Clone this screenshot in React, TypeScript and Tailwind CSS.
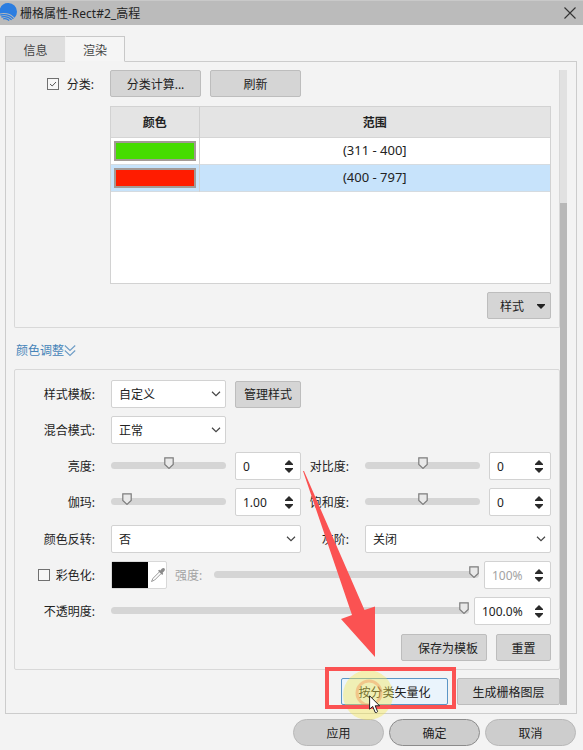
import React, { useState } from "react";
import clsx from "clsx";

const buttonStyle =
  "h-[27px] rounded-xs border border-[#bdbdbd] bg-[#d5d5d5] pt-0.5 text-center hover:bg-[#cccccc]";

const classes = [
  { color: "#46dc00", range: "(311 - 400]" },
  { color: "#ff1c00", range: "(400 - 797]" },
];

function Label({
  htmlFor,
  className,
  children,
}: {
  htmlFor: string;
  className?: string;
  children: React.ReactNode;
}) {
  return (
    <label
      htmlFor={htmlFor}
      className={clsx("shrink-0 pt-0.5 pr-px text-right", className)}
    >
      {children}
    </label>
  );
}

function CheckBox({
  id,
  defaultChecked,
}: {
  id: string;
  defaultChecked?: boolean;
}) {
  const [checked, setChecked] = useState(Boolean(defaultChecked));

  return (
    <span className="relative block size-3">
      <input
        id={id}
        type="checkbox"
        checked={checked}
        onChange={(e) => setChecked(e.target.checked)}
        className="block size-3 appearance-none border border-[#707070] bg-[#f7f7f7]"
      />
      {checked && (
        <svg
          viewBox="0 0 12 12"
          className="pointer-events-none absolute inset-0 size-3"
          fill="none"
          stroke="#555"
        >
          <path d="M3 6 L5.2 8 L9 4" />
        </svg>
      )}
    </span>
  );
}

function Select({
  id,
  options,
  className,
}: {
  id: string;
  options: string[];
  className?: string;
}) {
  return (
    <div className={clsx("relative", className)}>
      <select
        id={id}
        className="block h-7 w-full appearance-none rounded-xs border border-[#d2d2d2] bg-white pt-0.5 pr-6 pl-[7px]"
      >
        {options.map((option) => (
          <option key={option}>{option}</option>
        ))}
      </select>
      <svg
        viewBox="0 0 10 6"
        className="pointer-events-none absolute top-[11px] right-[5px] h-1.5 w-2.5"
        fill="none"
        stroke="#444"
        strokeWidth="1.2"
      >
        <path d="M1 0.8 L5 4.6 L9 0.8" />
      </svg>
    </div>
  );
}

function Slider({
  id,
  min,
  max,
  step = 1,
  initial,
  disabled,
}: {
  id: string;
  min: number;
  max: number;
  step?: number;
  initial: number;
  disabled?: boolean;
}) {
  const [value, setValue] = useState(initial);
  const ratio = (value - min) / (max - min);

  return (
    <div className="relative h-7 min-w-0 flex-1">
      <input
        id={id}
        type="range"
        min={min}
        max={max}
        step={step}
        value={value}
        disabled={disabled}
        onChange={(e) => setValue(Number(e.target.value))}
        className="mt-2.5 block h-[7px] w-full appearance-none rounded-full bg-[#d5d5d5] [&::-webkit-slider-thumb]:size-2.5 [&::-webkit-slider-thumb]:appearance-none [&::-webkit-slider-thumb]:opacity-0"
      />
      {/* Thumb travels the track minus its own width */}
      <div className="pointer-events-none absolute inset-x-0 top-[5px] mr-2.5 h-3">
        <svg
          viewBox="0 0 10 12"
          className="absolute h-3 w-2.5"
          style={{ left: `${ratio * 100}%` }}
          fill="#e9e9e9"
          stroke="#7c7c7c"
          strokeWidth="1.2"
        >
          <path d="M0.8 0.8 H9.2 V7.4 L5 11.4 L0.8 7.4 Z" />
        </svg>
      </div>
    </div>
  );
}

function SpinBox({
  label,
  value,
  className,
  disabled,
}: {
  label: string;
  value: string;
  className?: string;
  disabled?: boolean;
}) {
  const [text, setText] = useState(value);
  const digits = text.split(".")[1]?.replace("%", "").length ?? 0;
  const unit = text.endsWith("%") ? "%" : "";

  const stepBy = (delta: number) =>
    setText((parseFloat(text) + delta).toFixed(digits) + unit);

  return (
    <div
      className={clsx(
        "flex h-7 shrink-0 items-center rounded-xs border border-[#d2d2d2] bg-white pr-[7px] pl-[7px]",
        className,
      )}
    >
      <input
        type="text"
        aria-label={label}
        value={text}
        disabled={disabled}
        onChange={(e) => setText(e.target.value)}
        className="h-full w-0 min-w-0 flex-1 outline-none disabled:text-[#a3a3a3]"
      />
      <div className="flex flex-col gap-[3px]">
        <button type="button" aria-label="+" onClick={() => stepBy(1)}>
          <svg viewBox="0 0 8 5" className="block h-[5px] w-2" fill="#2b2b2b">
            <path d="M4 0 L8 4 V5 H0 V4 Z" />
          </svg>
        </button>
        <button type="button" aria-label="-" onClick={() => stepBy(-1)}>
          <svg viewBox="0 0 8 5" className="block h-[5px] w-2" fill="#2b2b2b">
            <path d="M0 0 H8 V1 L4 5 L0 1 Z" />
          </svg>
        </button>
      </div>
    </div>
  );
}

function Logo() {
  return (
    <svg viewBox="0 0 18 20" className="h-5 w-[18px] shrink-0">
      <path
        d="M0 10.400 V5.500 A8.800 8.800 0 0 1 8.200 0 A8.700 8.700 0 0 1 17 8.700 Q17 12.200 14.600 14.800 Q11.500 11 6.500 10.200 Q3 9.700 0 10.400 Z"
        fill="#2b7de0"
      />
      <g fill="none" stroke="#2b7de0" strokeWidth="1.3">
        <path d="M0.300 12 Q8.500 10.200 13.400 15.800" />
        <path d="M1.400 14 Q7.500 12.500 11.600 16.900" />
        <path d="M3.200 15.800 Q6.500 15 9.200 17.400" />
      </g>
    </svg>
  );
}

function ClassTable() {
  const [selected, setSelected] = useState(1);

  return (
    <div className="h-[178px] border border-[#d2d2d2] bg-white">
      <table className="w-full table-fixed border-collapse text-center">
        <thead>
          <tr className="h-[30px] border-b border-[#d5d5d5] bg-[#e4e4e4]">
            <th className="w-[88px] border-r border-[#cfcfcf] pt-0.5 font-bold">
              颜色
            </th>
            <th className="pt-0.5 font-bold">范围</th>
          </tr>
        </thead>
        <tbody>
          {classes.map((item, index) => (
            <tr
              key={item.range}
              onClick={() => setSelected(index)}
              className={clsx(
                "h-[27px] border-b border-[#d5dbe0]",
                index === selected && "bg-[#c7e3fb]",
              )}
            >
              <td className="border-r border-[#d2d2d2] px-[3px]">
                <button
                  type="button"
                  aria-label={item.color}
                  className="block h-5 w-full border-2 border-[#a39a96]"
                  style={{ backgroundColor: item.color }}
                />
              </td>
              <td className="pt-px text-[13px]">{item.range}</td>
            </tr>
          ))}
        </tbody>
      </table>
    </div>
  );
}

function ColorPicker() {
  return (
    <button
      type="button"
      aria-label="颜色"
      className="flex h-7 w-14 shrink-0 items-center rounded-xs border border-[#d8d8d8] bg-white"
    >
      <span className="h-full w-9 bg-black" />
      <svg viewBox="0 0 16 16" className="ml-0.5 size-4">
        <path
          d="M9.500 4.800 L3 11.300 L1.500 14.500 L4.700 13 L11.200 6.500"
          fill="#fff"
          stroke="#999"
        />
        <path
          d="M8 3.800 L9.200 2.800 L10.200 3.600 L12 1.600 Q13.600 0.600 14.600 1.600 Q15.400 2.800 14.400 4 L12.600 5.800 L13.200 6.800 L12.200 8 Z"
          fill="#8a8a8a"
        />
      </svg>
    </button>
  );
}

// Click marker, frame and arrow drawn on top of the highlighted button
function Callout() {
  return (
    <div className="pointer-events-none">
      <svg
        viewBox="0 0 52 52"
        className="absolute -top-2 left-px z-10 size-[52px]"
      >
        <circle cx="26" cy="25" r="25" fill="#f7e94a" opacity="0.4" />
        <circle
          cx="27"
          cy="23"
          r="12"
          fill="none"
          stroke="#f58a4a"
          strokeWidth="3"
          opacity="0.4"
        />
      </svg>
      <div className="absolute -top-[11px] -right-2 -bottom-1 -left-4 z-20 border-4 border-[#fb5252]" />
      <svg
        viewBox="0 0 12 19"
        className="absolute top-[17px] left-7 z-30 h-[19px] w-3"
      >
        <path
          d="M0.600 0.800 V14.200 L3.700 11.400 L6.200 17.400 Q7.500 18.200 8.600 16.600 L6.200 10.800 H10.600 Z"
          fill="#fff"
          stroke="#222"
        />
      </svg>
      <svg
        viewBox="0 0 72 186"
        className="absolute bottom-12 -left-[38px] z-20 h-[186px] w-[72px]"
        fill="#fb5252"
      >
        <path d="M0 0 L1 0 L61.500 139 L72 135.500 V186 L38 148 L49 144 Z" />
      </svg>
    </div>
  );
}

export default function App() {
  const [tab, setTab] = useState("渲染");

  return (
    <main className="flex min-h-screen flex-col bg-[#f3f3f3] font-['Noto_Sans','Noto_Sans_CJK_SC',sans-serif] text-xs text-[#222]">
      {/* Title bar */}
      <header className="flex h-[25px] items-center border-t border-[#c9c9c9] bg-[#bbbbbb]">
        <Logo />
        <h1 className="ml-0.5 flex-1 pt-px">栅格属性-Rect#2_高程</h1>
        <button type="button" aria-label="关闭" className="mr-[7px]">
          <svg
            viewBox="0 0 12 12"
            className="block size-3"
            fill="none"
            stroke="#333"
            strokeWidth="1.1"
          >
            <path d="M0.500 0.500 L11.500 11.500 M11.500 0.500 L0.500 11.500" />
          </svg>
        </button>
      </header>

      <div className="pt-[11px] pr-1.5 pl-[5px]">
        {/* Tabs */}
        <div role="tablist" className="relative z-10 flex">
          {["信息", "渲染"].map((name) => (
            <button
              key={name}
              type="button"
              role="tab"
              aria-selected={tab === name}
              onClick={() => setTab(name)}
              className={clsx(
                "h-[26px] w-[60px] border border-[#c8c8c8] pt-[3px] text-[#444]",
                tab === name
                  ? "border-b-[#f3f3f3] border-l-[#f3f3f3] bg-[#f5f5f5]"
                  : "border-r-0 bg-[#dedede]",
              )}
            >
              {name}
            </button>
          ))}
        </div>

        <div
          role="tabpanel"
          className="-mt-px flex border border-[#cccccc] py-2 pr-[9px] pl-2"
        >
          <div className="min-w-0 flex-1">
            {/* Classes */}
            <section className="flex gap-3.5 rounded-b-xs border border-t-0 border-[#d8d8d8] pr-2 pb-2">
              <div className="flex h-[27px] w-[81px] shrink-0 items-center justify-end gap-2 pr-px">
                <CheckBox id="classify" defaultChecked />
                <Label htmlFor="classify">分类:</Label>
              </div>
              <div className="flex min-w-0 flex-1 flex-col">
                <div className="mb-[9px] flex gap-[9px]">
                  <button type="button" className={clsx(buttonStyle, "w-[91px]")}>
                    分类计算...
                  </button>
                  <button type="button" className={clsx(buttonStyle, "w-[91px]")}>
                    刷新
                  </button>
                </div>
                <ClassTable />
                <button
                  type="button"
                  className={clsx(
                    buttonStyle,
                    "mt-2 flex w-16 items-center justify-between self-end pr-[5px] pl-3",
                  )}
                >
                  样式
                  <svg viewBox="0 0 8 5" className="h-[5px] w-2" fill="#222">
                    <path d="M0 0 H8 V1 L4 5 L0 1 Z" />
                  </svg>
                </button>
              </div>
            </section>

            <div className="flex h-[41px] items-center pt-[5px] pl-0.5">
              <button
                type="button"
                className="flex items-center text-[#4583b8]"
              >
                颜色调整
                <svg
                  viewBox="0 0 12 12"
                  className="size-3"
                  fill="none"
                  stroke="#6c9cc6"
                  strokeWidth="1.1"
                >
                  <path d="M0.800 0.500 L6 5.500 L11.200 0.500 M0.800 5.500 L6 10.500 L11.200 5.500" />
                </svg>
              </button>
            </div>

            {/* Color adjustment */}
            <section className="rounded-xs border border-[#d8d8d8] pt-2.5 pr-2 pb-2">
              <div className="flex flex-col gap-2">
                <div className="flex items-center">
                  <Label htmlFor="template" className="mr-[15px] w-[81px]">
                    样式模板:
                  </Label>
                  <Select
                    id="template"
                    options={["自定义"]}
                    className="mr-[9px] w-[115px]"
                  />
                  <button type="button" className={clsx(buttonStyle, "w-[66px]")}>
                    管理样式
                  </button>
                </div>

                <div className="flex items-center">
                  <Label htmlFor="blend" className="mr-[15px] w-[81px]">
                    混合模式:
                  </Label>
                  <Select id="blend" options={["正常"]} className="w-[115px]" />
                </div>

                <div className="flex items-center">
                  <Label htmlFor="brightness" className="mr-[15px] w-[81px]">
                    亮度:
                  </Label>
                  <div className="flex flex-[1_1_190px] gap-[9px]">
                    <Slider id="brightness" min={-100} max={100} initial={0} />
                    <SpinBox label="亮度" value="0" className="w-[66px]" />
                  </div>
                  <Label htmlFor="contrast" className="mr-[15px] w-[49px]">
                    对比度:
                  </Label>
                  <div className="flex flex-[1_1_186px] gap-[9px]">
                    <Slider id="contrast" min={-100} max={100} initial={0} />
                    <SpinBox label="对比度" value="0" className="w-[62px]" />
                  </div>
                </div>

                <div className="flex items-center">
                  <Label htmlFor="gamma" className="mr-[15px] w-[81px]">
                    伽玛:
                  </Label>
                  <div className="flex flex-[1_1_190px] gap-[9px]">
                    <Slider id="gamma" min={0} max={10} step={0.1} initial={1} />
                    <SpinBox label="伽玛" value="1.00" className="w-[66px]" />
                  </div>
                  <Label htmlFor="saturation" className="mr-[15px] w-[49px]">
                    饱和度:
                  </Label>
                  <div className="flex flex-[1_1_186px] gap-[9px]">
                    <Slider id="saturation" min={-100} max={100} initial={0} />
                    <SpinBox label="饱和度" value="0" className="w-[62px]" />
                  </div>
                </div>
              </div>

              <div className="mt-[9px] flex flex-col gap-2">
                <div className="flex items-center">
                  <Label htmlFor="invert" className="mr-[15px] w-[81px]">
                    颜色反转:
                  </Label>
                  <Select
                    id="invert"
                    options={["否", "是"]}
                    className="flex-[1_1_190px]"
                  />
                  <Label htmlFor="gray" className="mr-[15px] w-[49px]">
                    灰阶:
                  </Label>
                  <Select
                    id="gray"
                    options={["关闭"]}
                    className="flex-[1_1_186px]"
                  />
                </div>

                <div className="flex items-center">
                  <div className="mr-[15px] flex w-[81px] items-center justify-end gap-1.5">
                    <CheckBox id="colorize" />
                    <Label htmlFor="colorize">彩色化:</Label>
                  </div>
                  <ColorPicker />
                  <Label
                    htmlFor="strength"
                    className="mr-[11px] ml-2 text-[#a3a3a3]"
                  >
                    强度:
                  </Label>
                  <Slider
                    id="strength"
                    min={0}
                    max={100}
                    initial={100}
                    disabled
                  />
                  <SpinBox
                    label="强度"
                    value="100%"
                    className="ml-[5px] w-[67px]"
                    disabled
                  />
                </div>

                <div className="flex items-center">
                  <Label htmlFor="opacity" className="mr-[15px] w-[81px]">
                    不透明度:
                  </Label>
                  <Slider id="opacity" min={0} max={100} initial={100} />
                  <SpinBox
                    label="不透明度"
                    value="100.0%"
                    className="ml-[5px] w-[77px]"
                  />
                </div>
              </div>

              <div className="mt-[9px] flex justify-end gap-[9px]">
                <button
                  type="button"
                  className={clsx(buttonStyle, "w-[86px] pl-2")}
                >
                  保存为模板
                </button>
                <button type="button" className={clsx(buttonStyle, "w-[55px]")}>
                  重置
                </button>
              </div>
            </section>

            {/* Output actions */}
            <div className="mt-2 flex justify-end gap-[9px]">
              <div className="relative">
                <button
                  type="button"
                  className="block h-[27px] w-[107px] rounded-xs border border-[#5c96c6] bg-[#eaf4fc] pt-0.5"
                >
                  按分类矢量化
                </button>
                <Callout />
              </div>
              <button type="button" className={clsx(buttonStyle, "w-[103px]")}>
                生成栅格图层
              </button>
            </div>
          </div>

          {/* Scroll bar */}
          <div className="flex w-[7px] flex-col justify-end bg-[#e1e1e1]">
            <div className="h-[79%] bg-[#b8b8b8]" />
          </div>
        </div>

        {/* Footer */}
        <footer className="flex justify-end gap-[5px] pt-[5px] pr-px pb-1">
          {["应用", "确定", "取消"].map((name) => (
            <button
              key={name}
              type="button"
              className={clsx(
                "h-[27px] w-[91px] rounded-full border bg-[#cdcdcd] pt-0.5",
                name === "确定" ? "border-[#8c8c8c]" : "border-[#b8b8b8]",
              )}
            >
              {name}
            </button>
          ))}
        </footer>
      </div>
    </main>
  );
}
